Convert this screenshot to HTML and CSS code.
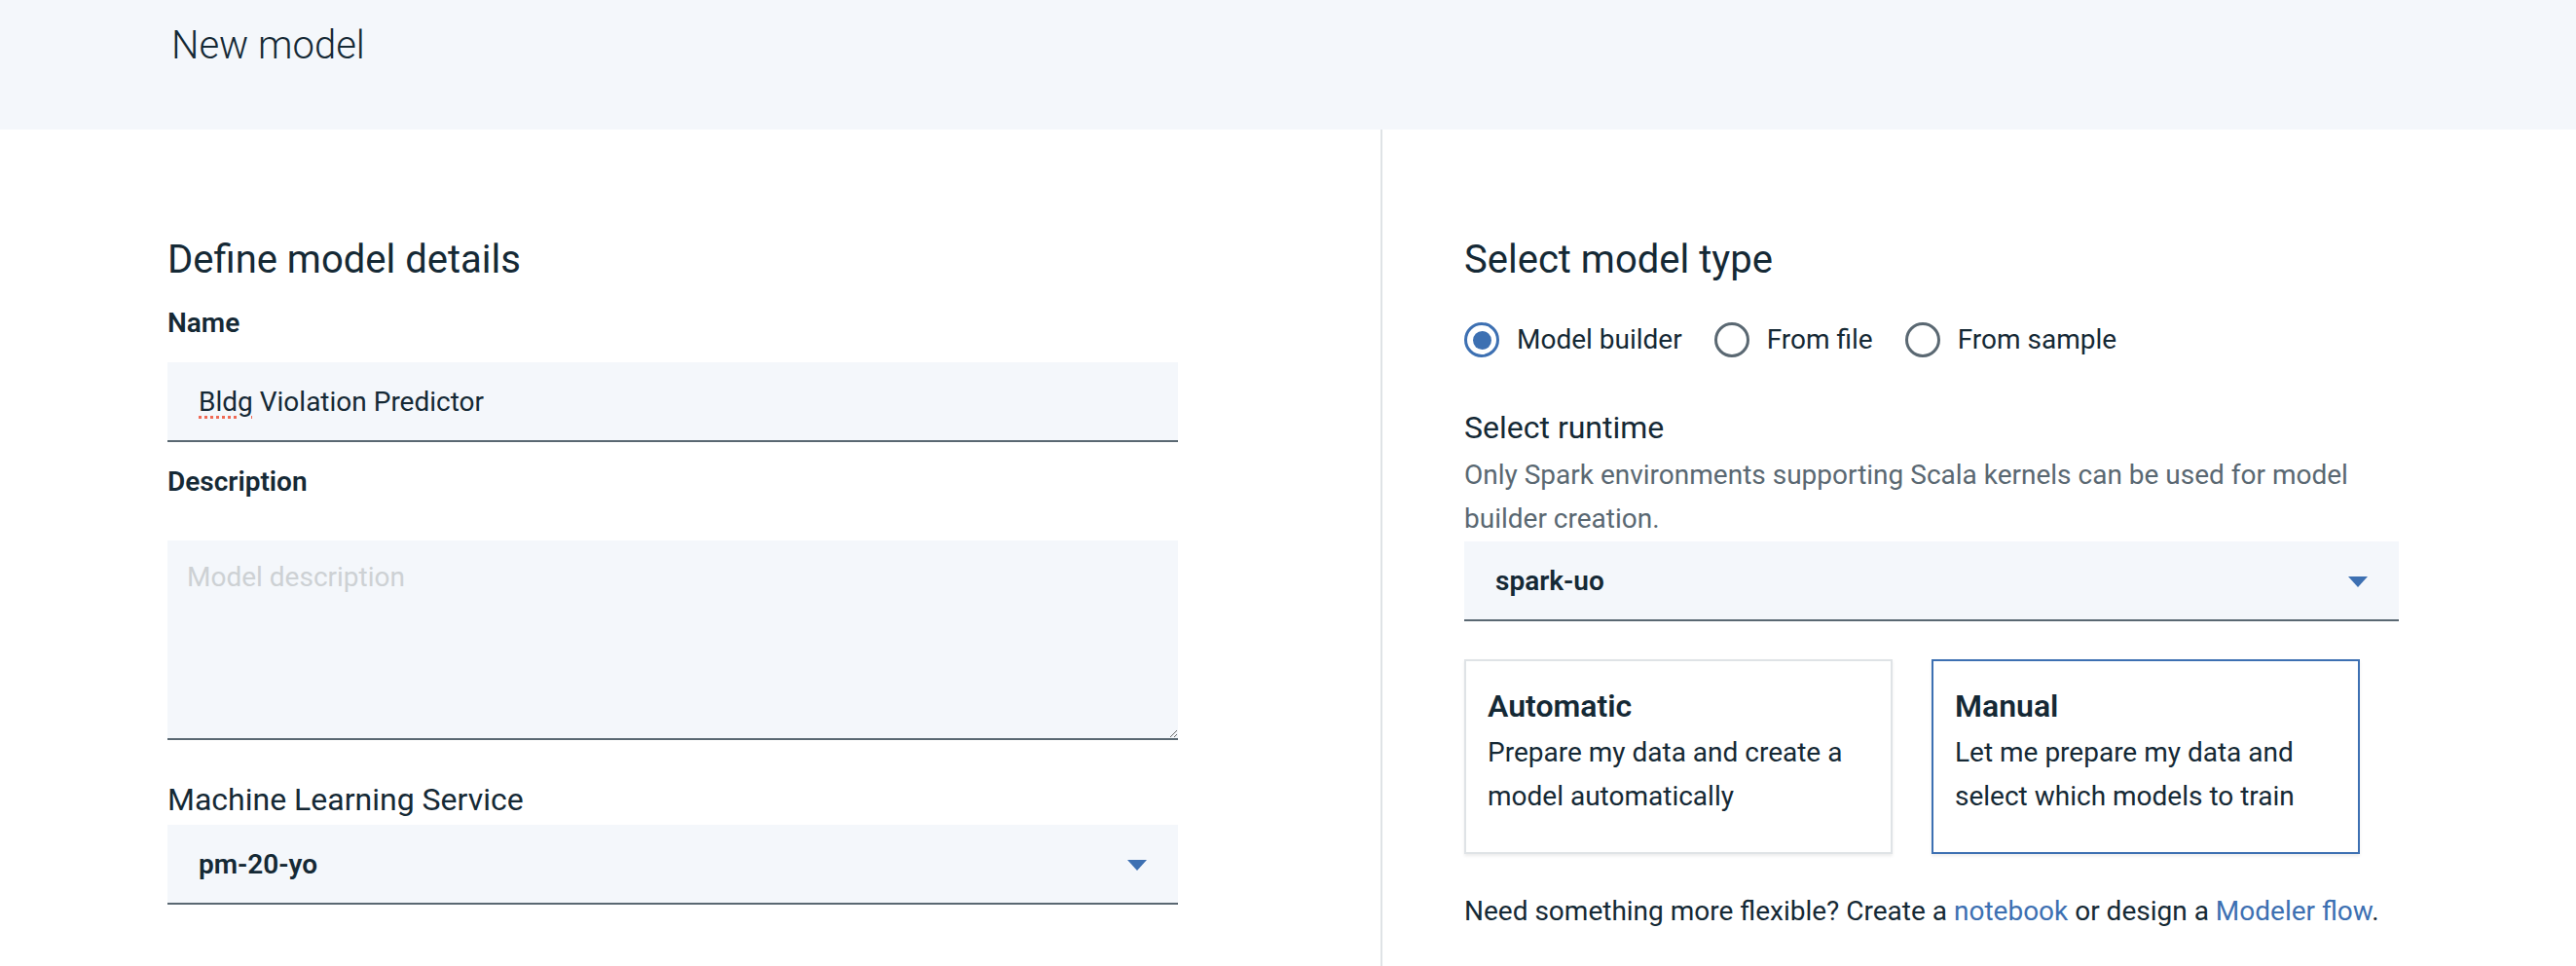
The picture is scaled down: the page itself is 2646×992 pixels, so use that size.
FILE: index.html
```html
<!DOCTYPE html>
<html lang="en">
<head>
<meta charset="utf-8">
<title>New model</title>
<link rel="stylesheet" href="styles.css">
</head>
<body>
<header class="page-header">
  <h1 class="page-title">New model</h1>
</header>
<main class="layout">
  <section class="panel panel-left">
    <h2 class="section-title">Define model details</h2>
    <label class="field-label">Name</label>
    <div class="text-field"><span class="misspelled">Bldg</span>&nbsp;Violation Predictor</div>
    <label class="field-label field-label-desc">Description</label>
    <textarea class="text-area" placeholder="Model description"></textarea>
    <div class="select-label select-label-service">Machine Learning Service</div>
    <div class="select-field">
      <span class="select-value">pm-20-yo</span>
      <svg class="select-arrow" width="20" height="11" viewBox="0 0 20 11"><path d="M0 0 L20 0 L10 11 Z" fill="#3d70b2"/></svg>
    </div>
  </section>
  <section class="panel panel-right">
    <h2 class="section-title">Select model type</h2>
    <div class="radio-group">
      <div class="radio-item"><span class="radio radio-checked"><span class="radio-dot"></span></span><span class="radio-label">Model builder</span></div>
      <div class="radio-item"><span class="radio"></span><span class="radio-label">From file</span></div>
      <div class="radio-item"><span class="radio"></span><span class="radio-label">From sample</span></div>
    </div>
    <div class="select-label select-label-runtime">Select runtime</div>
    <p class="helper-text">Only Spark environments supporting Scala kernels can be used for model builder creation.</p>
    <div class="select-field select-runtime">
      <span class="select-value">spark-uo</span>
      <svg class="select-arrow" width="20" height="11" viewBox="0 0 20 11"><path d="M0 0 L20 0 L10 11 Z" fill="#3d70b2"/></svg>
    </div>
    <div class="tiles">
      <div class="tile">
        <div class="tile-title">Automatic</div>
        <div class="tile-desc">Prepare my data and create a model automatically</div>
      </div>
      <div class="tile tile-selected">
        <div class="tile-title">Manual</div>
        <div class="tile-desc">Let me prepare my data and select which models to train</div>
      </div>
    </div>
    <p class="footer-note">Need something more flexible? Create a <a class="link" href="#">notebook</a> or design a <a class="link" href="#">Modeler flow</a>.</p>
  </section>
</main>
</body>
</html>
```
FILE: styles.css
```css
* { box-sizing: border-box; }

html, body {
  margin: 0;
  padding: 0;
  background: #ffffff;
  font-family: Roboto, "Noto Sans", "Liberation Sans", sans-serif;
  color: #152935;
}

.page-header {
  height: 133px;
  background: #f4f7fb;
  padding: 23px 0 0 176px;
}

.page-title {
  margin: 0;
  font-size: 40px;
  line-height: 48px;
  font-weight: 300;
  color: #152935;
}

.layout {
  display: flex;
  height: 859px;
}

.panel-left {
  width: 1420px;
  padding: 110px 208px 0 172px;
  border-right: 2px solid #dfe3e6;
  display: flex;
  flex-direction: column;
}

.panel-right {
  flex: 1;
  padding: 110px 0 0 84px;
  display: flex;
  flex-direction: column;
  width: 1226px;
}

.panel-right > * { width: 960px; }

.section-title {
  margin: 0;
  font-size: 40px;
  line-height: 48px;
  font-weight: 400;
  color: #152935;
}

.field-label {
  display: block;
  margin-top: 23px;
  font-size: 28px;
  line-height: 36px;
  font-weight: 600;
}

.field-label-desc { margin-top: 23px; }

.text-field {
  margin-top: 22px;
  height: 82px;
  background: #f4f7fb;
  border-bottom: 2px solid #5a6872;
  padding: 0 32px;
  display: flex;
  align-items: center;
  font-size: 28px;
  color: #152935;
}

.misspelled {
  text-decoration: underline dotted #f06a55;
  text-decoration-thickness: 3px;
  text-underline-offset: 5px;
}

.text-area {
  display: block;
  margin: 42px 0 0;
  width: 100%;
  height: 205px;
  background: #f4f7fb;
  border: none;
  border-bottom: 2px solid #5a6872;
  border-radius: 0;
  padding: 20px 20px;
  font-family: Roboto, "Noto Sans", "Liberation Sans", sans-serif;
  font-size: 28px;
  line-height: 36px;
  color: #152935;
  outline: none;
}

.text-area::placeholder { color: #cdd1d4; }

.select-label {
  font-size: 32px;
  line-height: 40px;
  font-weight: 400;
}

.select-label-service { margin-top: 41px; }

.select-field {
  margin-top: 6px;
  height: 82px;
  background: #f4f7fb;
  border-bottom: 2px solid #5a6872;
  padding: 0 32px;
  display: flex;
  align-items: center;
  justify-content: space-between;
}

.select-value {
  font-size: 28px;
  font-weight: 600;
  color: #152935;
}

.select-arrow { flex: none; margin-top: 2px; }

.radio-group {
  margin-top: 40px;
  display: flex;
  align-items: center;
  gap: 33px;
  height: 36px;
}

.radio-item {
  display: flex;
  align-items: center;
  gap: 18px;
}

.radio {
  width: 36px;
  height: 36px;
  border-radius: 50%;
  border: 3px solid #5a6872;
  display: flex;
  align-items: center;
  justify-content: center;
  flex: none;
}

.radio-checked { border-color: #3d70b2; }

.radio-dot {
  width: 19px;
  height: 19px;
  border-radius: 50%;
  background: #3d70b2;
}

.radio-label {
  font-size: 28px;
  line-height: 36px;
  color: #152935;
}

.select-label-runtime { margin-top: 52px; }

.helper-text {
  margin: 6px 0 0;
  font-size: 28px;
  line-height: 45px;
  color: #5a6872;
  width: 940px;
}

.select-runtime { margin-top: 1px; }

.tiles {
  margin-top: 39px;
  display: flex;
  gap: 40px;
}

.tile {
  width: 440px;
  height: 200px;
  border: 2px solid #dfe3e6;
  box-shadow: 0 2px 3px rgba(0, 0, 0, 0.08);
  padding: 26px 20px 0 22px;
  background: #ffffff;
}

.tile-selected { border-color: #3d70b2; }

.tile-title {
  font-size: 32px;
  line-height: 40px;
  font-weight: 600;
}

.tile-desc {
  margin-top: 5px;
  font-size: 28px;
  line-height: 45px;
}

.footer-note {
  margin: 41px 0 0;
  font-size: 28px;
  line-height: 36px;
  color: #152935;
}

.link {
  color: #3d70b2;
  text-decoration: none;
}
```
